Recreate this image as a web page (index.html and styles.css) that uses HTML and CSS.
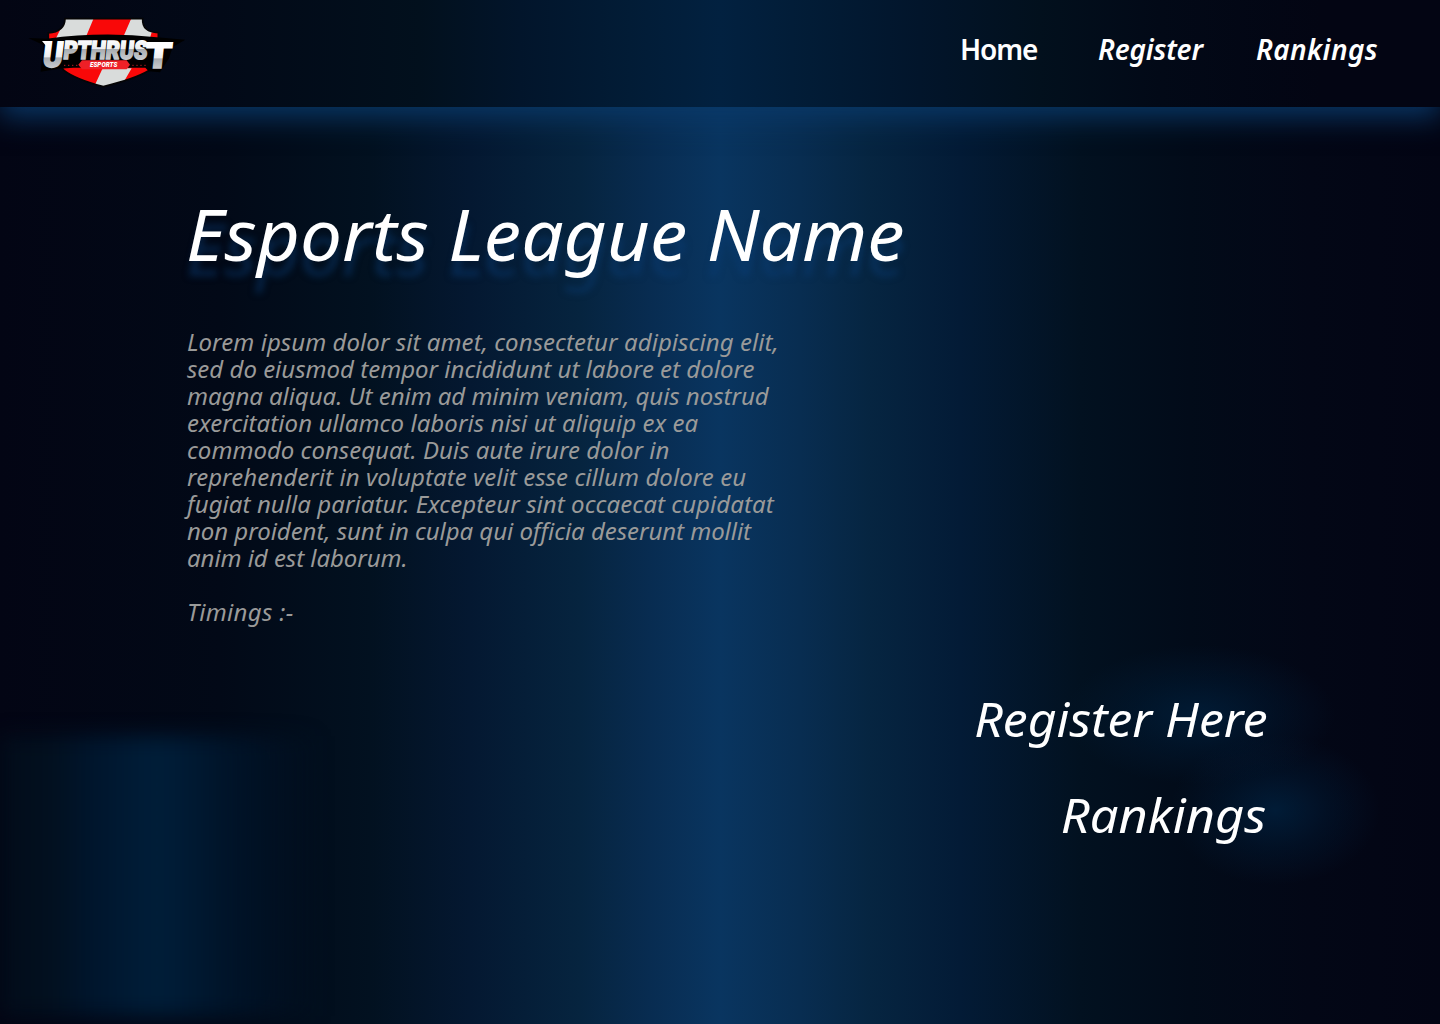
FILE: index.html
```html
<!DOCTYPE html>
<html lang="en">
<head>
<meta charset="utf-8">
<title>Upthrust Esports</title>
<link rel="stylesheet" href="styles.css">
</head>
<body>
<header class="site-header">
  <a class="logo" href="#">
    <svg viewBox="0 0 540 300" width="180" height="100" role="img" aria-label="Upthrust Esports">
      <defs>
        <linearGradient id="metal" gradientUnits="userSpaceOnUse" x1="0" y1="-60" x2="0" y2="0">
          <stop offset="0" stop-color="#fff"/>
          <stop offset="0.5" stop-color="#eceef0"/>
          <stop offset="0.54" stop-color="#a9adb1"/>
          <stop offset="1" stop-color="#c6c9cc"/>
        </linearGradient>
        <clipPath id="shield"><path d="M135 42H368Q366 82 415 83V140L388 196Q345 222 250 245Q165 222 132 196L85 140V84Q134 80 135 42Z"/></clipPath>
      </defs>
      <g clip-path="url(#shield)">
        <path fill="#f90808" d="M80 40H420V250H80Z"/>
        <path fill="#d9dcdb" d="M137 40H221L196 100H108ZM334 40H420V82H395L390 100H308ZM248 190H335L300 250H220Z"/>
      </g>
      <path fill="none" stroke="#050506" stroke-width="5" d="M135 41H368Q366 82 415 83V140L388 196Q345 222 250 245Q165 222 132 196L85 140V84Q134 80 135 41Z"/>
      <path fill="#000" d="M25 99L80 101Q250 78 410 97L496 104L458 126L447 160L420 202L386 199L376 188H160L118 191L62 200L70 120Z"/>
      <path fill="#fff" d="M66 108H96L92 122H78ZM420 111H460L440 128H420Z"/>
      <g class="logo-word" fill="url(#metal)" stroke="url(#metal)" stroke-width="5">
        <text x="0" y="0" font-size="106" textLength="60" lengthAdjust="spacingAndGlyphs" transform="translate(65 186) skewX(-7)">U</text>
        <text x="0" y="0" font-size="76" textLength="252" lengthAdjust="spacingAndGlyphs" transform="translate(128 161) skewX(-6)">PTHRUS</text>
        <text x="0" y="0" font-size="106" textLength="78" lengthAdjust="spacingAndGlyphs" transform="translate(373 189) skewX(-6)">T</text>
      </g>
      <path fill="#ee2027" d="M186 166H320L330 179L320 193H186L175 179Z"/>
      <text class="logo-sub" x="210" y="187" font-size="22" textLength="82" lengthAdjust="spacingAndGlyphs">ESPORTS</text>
      <path fill="none" stroke="#b51c22" stroke-width="3" stroke-dasharray="4 8" d="M132 181H174M337 181H382"/>
    </svg>
  </a>
  <nav class="nav">
    <a class="nav-link nav-home" href="#">Home</a>
    <a class="nav-link nav-register" href="#">Register</a>
    <a class="nav-link nav-rankings" href="#">Rankings</a>
  </nav>
</header>
<main class="hero">
  <h1 class="title">Esports League Name</h1>
  <p class="copy">
    <span class="line wide">Lorem ipsum dolor sit amet, consectetur adipiscing elit,</span>
    <span class="line">sed do eiusmod tempor incididunt ut labore et dolore</span>
    <span class="line narrow">magna aliqua. Ut enim ad minim veniam, quis nostrud</span>
    <span class="line wide">exercitation ullamco laboris nisi ut aliquip ex ea</span>
    <span class="line">commodo consequat. Duis aute irure dolor in</span>
    <span class="line wide">reprehenderit in voluptate velit esse cillum dolore eu</span>
    <span class="line wide">fugiat nulla pariatur. Excepteur sint occaecat cupidatat</span>
    <span class="line narrow">non proident, sunt in culpa qui officia deserunt mollit</span>
    <span class="line narrow">anim id est laborum.</span>
  </p>
  <p class="copy timings">Timings :-</p>
  <div class="actions">
    <a class="action action-register" href="#">Register Here</a>
    <a class="action action-rankings" href="#">Rankings</a>
  </div>
</main>
</body>
</html>
```
FILE: styles.css
```css
* { box-sizing: border-box; }

body {
  margin: 0;
  height: 1024px;
  overflow: hidden;
  display: flex;
  flex-direction: column;
  font-family: "Noto Sans", "Open Sans", sans-serif;
  color: #fff;
  background:
    radial-gradient(ellipse 135px 70px at 1200px 715px, rgba(0, 36, 68, .65), rgba(0, 32, 62, .35) 50%, transparent),
    radial-gradient(ellipse 105px 75px at 1275px 810px, rgba(0, 36, 68, .7), rgba(0, 32, 62, .35) 50%, transparent),
    linear-gradient(90deg, #030514 0, #020917 220px, #021120 370px, #041831 470px, #06243f 580px, #082c51 650px, #093560 720px, #082d51 800px, #062541 870px, #031b36 960px, #021120 1080px, #020b19 1190px, #030716 1310px, #030514 1440px);
}

body::before {
  content: "";
  position: absolute;
  left: 0;
  top: 736px;
  width: 320px;
  height: 280px;
  background: linear-gradient(90deg, #020c1a 0, #02101f 50px, #00152c 90px, #001d38 150px, #001d38 165px, #00152b 220px, transparent 320px);
  filter: blur(10px);
}

.site-header {
  position: relative;
  display: flex;
  align-items: flex-start;
  justify-content: space-between;
  height: 107px;
  flex: none;
  padding: 5px 62px 0 20px;
  background: linear-gradient(90deg, #030513 0, #020917 220px, #02101d 420px, #02152b 520px, #021c36 630px, #022140 720px, #021c36 810px, #02152b 920px, #02101d 1040px, #020917 1160px, #030513 1320px);
  box-shadow: 0 10px 26px rgba(10, 57, 106, .92);
}

.logo, .logo svg { display: block; }

.logo-word {
  font-family: Roboto, sans-serif;
  font-weight: 900;
}

.logo-sub {
  font-family: Roboto, sans-serif;
  font-weight: 900;
  font-style: italic;
  fill: #fff;
}

.nav { display: flex; padding-top: 25px; }

.nav-link {
  color: #fff;
  text-decoration: none;
  font-size: 28px;
  line-height: 38px;
  font-weight: 600;
  font-style: italic;
  white-space: nowrap;
}

.nav-home { width: 138px; font-style: normal; letter-spacing: -1.1px; }
.nav-register { width: 158px; letter-spacing: -.2px; }
.nav-rankings { width: 122px; letter-spacing: .4px; }

.hero {
  position: relative;
  flex: 1;
  display: flex;
  flex-direction: column;
  padding: 79px 172px 0 186px;
}

.title {
  margin: 0;
  font-size: 71px;
  line-height: 96px;
  font-weight: 400;
  font-style: italic;
  white-space: nowrap;
  text-shadow: 0 15px 7px rgba(10, 62, 120, .5);
  transform: scaleX(1.052);
  transform-origin: left;
}

.copy {
  margin: 46px 0 0 1px;
  font-size: 24px;
  line-height: 27px;
  font-style: italic;
  color: #9a9a99;
  white-space: nowrap;
}

.line { display: block; }
.wide { letter-spacing: .06px; }
.narrow { letter-spacing: -.05px; }
.timings { margin-top: 27px; letter-spacing: .3px; }

.actions {
  display: flex;
  flex-direction: column;
  align-items: flex-end;
  margin-top: 61px;
}

.action {
  color: #fff;
  text-decoration: none;
  font-size: 48px;
  line-height: 66px;
  margin-bottom: 30px;
  font-style: italic;
  white-space: nowrap;
  transform-origin: right;
}

.action-register { transform: scaleX(1.038); }
.action-rankings { transform: scaleX(1.052); margin-right: 2px; }
```
